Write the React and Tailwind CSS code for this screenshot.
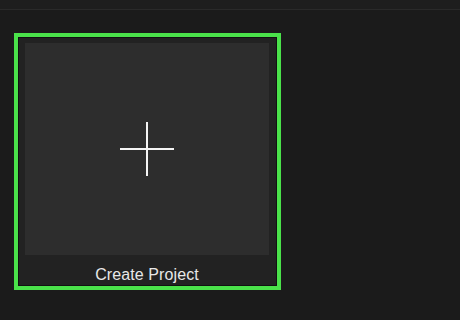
export default function App() {
  return (
    <div className="w-[460px] h-[320px] bg-[#1b1b1b] overflow-hidden font-['Liberation_Sans',Arial,sans-serif]">
      {/* top bar */}
      <div className="h-[10px] bg-[#1e1e1e] border-b border-[#2a2a2a]" />

      <div className="pl-[14px] pt-[23px]">
        <div className="w-[267px] h-[257px] border-4 border-[#4ae24a] bg-[#222222] shadow-[inset_0_0_0_1px_#111]">
          <div className="flex flex-col h-full pt-[6px] pl-[7px] pr-[8px]">
            <div className="h-[212px] bg-[#2d2d2d] flex items-center justify-center">
              <svg width="56" height="56" viewBox="0 0 56 56" fill="none">
                <path d="M28 1v54M1 28h54" stroke="#f4f4f4" strokeWidth="2" />
              </svg>
            </div>
            <div className="flex-1 flex justify-center pt-[12px]">
              <span className="text-[16px] leading-none text-[#e8e8e8] tracking-[0.1px]">Create Project</span>
            </div>
          </div>
        </div>
      </div>
    </div>
  )
}
